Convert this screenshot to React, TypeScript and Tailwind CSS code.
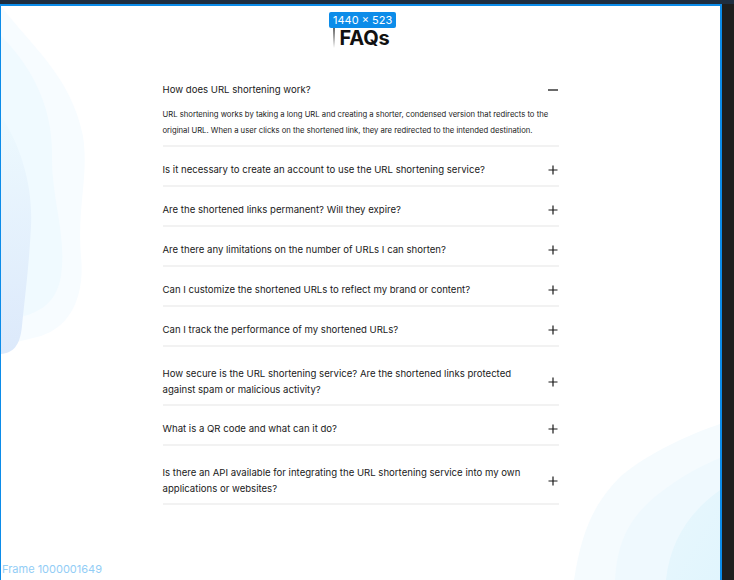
import React from "react";

type Item = { q: string; a?: string; two?: boolean };

const items: Item[] = [
  {
    q: "How does URL shortening work?",
    a: "URL shortening works by taking a long URL and creating a shorter, condensed version that redirects to the original URL. When a user clicks on the shortened link, they are redirected to the intended destination.",
  },
  { q: "Is it necessary to create an account to use the URL shortening service?" },
  { q: "Are the shortened links permanent? Will they expire?" },
  { q: "Are there any limitations on the number of URLs I can shorten?" },
  { q: "Can I customize the shortened URLs to reflect my brand or content?" },
  { q: "Can I track the performance of my shortened URLs?" },
  {
    q: "How secure is the URL shortening service? Are the shortened links protected against spam or malicious activity?",
    two: true,
  },
  { q: "What is a QR code and what can it do?" },
  {
    q: "Is there an API available for integrating the URL shortening service into my own applications or websites?",
    two: true,
  },
];

function Plus() {
  return (
    <svg width="10" height="10" viewBox="0 0 10 10" className="shrink-0">
      <path d="M5 0.5V9.5M0.5 5H9.5" stroke="#1a1a1a" strokeWidth="1.2" />
    </svg>
  );
}

function Minus() {
  return (
    <svg width="10" height="10" viewBox="0 0 10 10" className="shrink-0">
      <path d="M0 5H10" stroke="#1a1a1a" strokeWidth="1.3" />
    </svg>
  );
}

export default function App() {
  return (
    <div
      className="relative w-[734px] h-[580px] overflow-hidden bg-[#1e1e1e] flex flex-col"
      style={{ fontFamily: "Inter, 'Liberation Sans', sans-serif" }}
    >
      <div className="h-[4px] bg-[#1f2e40] shrink-0" />
      <div className="flex flex-1">
        <div className="relative w-[722px] h-full bg-white border-t-2 border-l border-r-2 border-[#0c8ce9] overflow-hidden">
          {/* background blobs */}
          <svg className="absolute left-0 top-0" width="719" height="574" viewBox="0 0 719 574">
            <defs>
              <linearGradient id="lb" x1="0" y1="0" x2="0" y2="1">
                <stop offset="0" stopColor="#edf9fe" />
                <stop offset="1" stopColor="#dce9fb" />
              </linearGradient>
              <linearGradient id="rb" x1="0" y1="0" x2="1" y2="1">
                <stop offset="0" stopColor="#e8f7fd" />
                <stop offset="1" stopColor="#e1f5fd" />
              </linearGradient>
            </defs>
            <path
              d="M0 0 C30 40 70 70 82 130 C88 170 76 200 80 250 C84 290 70 320 40 330 L0 340 Z"
              fill="#f7fcff"
            />
            <path
              d="M0 30 C30 60 52 100 51 150 C50 190 66 230 60 270 C55 300 35 310 0 315 Z"
              fill="#f0faff"
            />
            <path
              d="M0 110 C20 140 32 180 30 220 C28 260 24 290 21 320 C19 340 12 347 0 348 Z"
              fill="url(#lb)"
            />
            <path
              d="M573 574 C580 530 590 500 620 470 C650 445 690 428 719 418 L719 574 Z"
              fill="#f5fbfe"
            />
            <path
              d="M614 574 C616 540 625 515 655 490 C680 470 700 460 719 452 L719 574 Z"
              fill="#eff9fe"
            />
            <path
              d="M665 574 C668 545 680 520 700 500 C708 492 714 488 719 484 L719 574 Z"
              fill="url(#rb)"
            />
          </svg>

          <div className="relative flex flex-col items-center pt-[20px]">
            <h2 className="text-[20px] leading-[24px] font-bold text-[#111111] tracking-[-0.2px] pl-[8px]">
              FAQs
            </h2>
            <div className="w-[396px] mt-[17px] flex flex-col">
              {items.map((it, i) => (
                <div key={i} className="border-b-2 border-[#f2f2f2]">
                  <div
                    className={`flex items-center justify-between gap-[16px] ${
                      it.two ? "pt-[19px] pb-[6px]" : "pt-[15px] pb-[7px]"
                    }`}
                  >
                    <span className="max-w-[372px] text-[9.6px] leading-[16px] text-[#1a1a1a]">{it.q}</span>
                    <span className="pr-[1px]">{it.a ? <Minus /> : <Plus />}</span>
                  </div>
                  {it.a && (
                    <p className="text-[7.7px] leading-[16px] text-[#1a1a1a] mt-[2px] pb-[6px]">
                      {it.a}
                    </p>
                  )}
                </div>
              ))}
            </div>
          </div>

          <div className="absolute left-[1px] top-[556px] text-[11px] leading-[14px] text-[#92cdf6]">
            Frame 1000001649
          </div>
        </div>
        <div className="flex-1 bg-[#1e1e1e]" />
      </div>

      {/* figma overlays */}
      <div className="absolute left-[329px] top-[12px] h-[16px] px-[4px] rounded-[2px] bg-[#0c8ce9] text-white text-[11px] leading-[16px]">
        1440 × 523
      </div>
      <div className="absolute left-[333px] top-[28px] w-[2px] h-[20px] bg-gradient-to-b from-[#666666] to-[#ffffff]" />
    </div>
  );
}
